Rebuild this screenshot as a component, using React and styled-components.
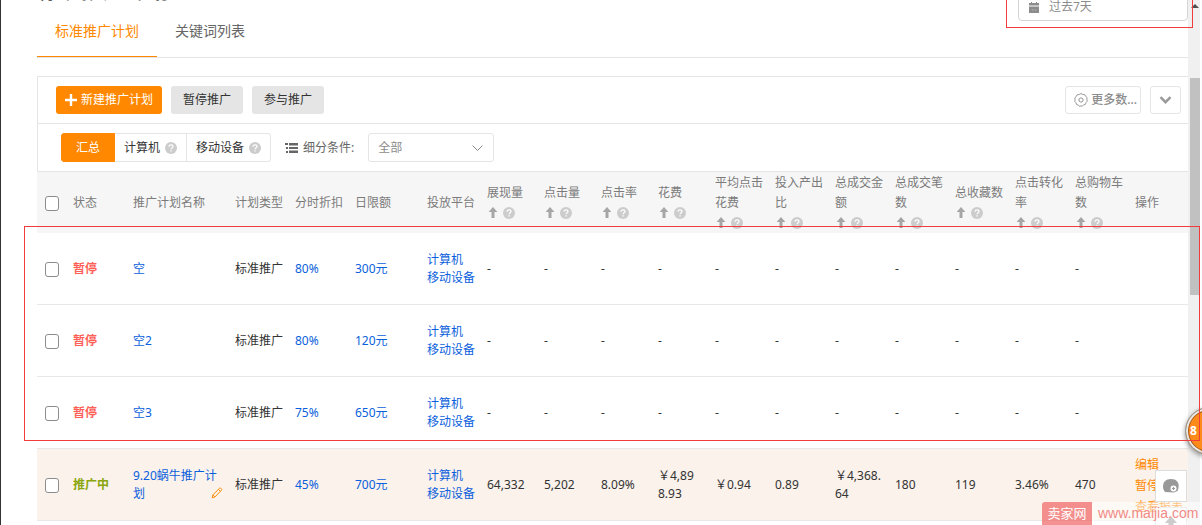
import { useState } from 'react'
import styled, { createGlobalStyle } from 'styled-components'

const METRICS = [
  { label: '展现量', narrow: true },
  { label: '点击量', narrow: true },
  { label: '点击率', narrow: true },
  { label: '花费', narrow: true },
  { label: '平均点击花费' },
  { label: '投入产出比' },
  { label: '总成交金额' },
  { label: '总成交笔数' },
  { label: '总收藏数' },
  { label: '点击转化率' },
  { label: '总购物车数' },
]

const EMPTY = METRICS.map(() => '-')

const PLANS = [
  { id: 1, name: '空', discount: '80%', limit: '300元', values: EMPTY },
  { id: 2, name: '空2', discount: '80%', limit: '120元', values: EMPTY },
  { id: 3, name: '空3', discount: '75%', limit: '650元', values: EMPTY },
  {
    id: 4,
    name: '9.20蜗牛推广计划',
    discount: '45%',
    limit: '700元',
    active: true,
    values: ['64,332', '5,202', '8.09%', '￥4,898.93', '￥0.94', '0.89', '￥4,368.64', '180', '119', '3.46%', '470'],
  },
]

function Help() {
  return (
    <HelpIcon viewBox="0 0 12 12" aria-hidden="true">
      <circle cx="6" cy="6" r="6" fill="#ccc" />
      <path d="M4 4.8C4 3.5 4.8 2.8 6 2.8s2 .7 2 1.7c0 1.3-1.9 1.4-1.9 2.8" fill="none" stroke="#fff" strokeWidth="1.2" />
      <path d="M5.4 8.3h1.3v1.3H5.4z" fill="#fff" />
    </HelpIcon>
  )
}

function SortArrow() {
  return (
    <svg width="10" height="11" viewBox="0 0 10 11" aria-hidden="true">
      <path d="M5 0L9.4 5H6.5v6h-3V5H.6z" fill="#a6a6a6" />
    </svg>
  )
}

function Plan({ plan }) {
  return (
    <Row $active={plan.active}>
      <Cell><Check type="checkbox" aria-label={plan.name} /></Cell>
      <Cell><Status $active={plan.active}>{plan.active ? '推广中' : '暂停'}</Status></Cell>
      <Cell>
        <NameBox>
          <Link href="#plan">{plan.name}</Link>
          {plan.active && (
            <EditButton type="button" aria-label="修改名称">
              <svg width="12" height="12" viewBox="0 0 12 12" fill="none" stroke="#ff8800">
                <path d="M1.2 10.8l.8-3L8.2 1.5c.6-.6 1.4-.6 2 0s.6 1.4 0 2L4 9.9zM7.4 2.4l2 2M2 7.9l2 2" />
              </svg>
            </EditButton>
          )}
        </NameBox>
      </Cell>
      <Cell>标准推广</Cell>
      <Cell><Link href="#discount">{plan.discount}</Link></Cell>
      <Cell><Link href="#limit">{plan.limit}</Link></Cell>
      <Cell>
        <Link href="#pc">计算机</Link>
        <br />
        <Link href="#mobile">移动设备</Link>
      </Cell>
      {plan.values.map((value, i) => (
        <Cell key={METRICS[i].label} $narrow={METRICS[i].narrow}>{value}</Cell>
      ))}
      <Cell>
        {plan.active && (
          <Actions>
            <ActionLink href="#edit">编辑</ActionLink>
            <ActionLink href="#pause">暂停</ActionLink>
            <ActionLink href="#report">查看报表</ActionLink>
          </Actions>
        )}
      </Cell>
    </Row>
  )
}

export default function App() {
  const [device, setDevice] = useState('all')

  return (
    <>
      <GlobalStyle />
      <Page>
        <Main>
          <Head>
            <Title>标准推广计划</Title>
            <DateButton type="button">
              <svg width="10" height="11" viewBox="0 0 10 11" aria-hidden="true">
                <path d="M0 1h2V0h1v1h4V0h1v1h2v2.5H0zM0 4.5h10V11H0z" fill="#8c8c8c" />
                <path d="M2.5 7.5h1l.5 1 1-1 1 1 1.5-1" fill="none" stroke="#bbb" strokeWidth=".6" />
              </svg>
              过去7天
            </DateButton>
          </Head>
          <Tabs>
            <Tab href="#plans" $active>标准推广计划</Tab>
            <Tab href="#keywords">关键词列表</Tab>
          </Tabs>

          <Panel>
            <Toolbar>
              <Button type="button" $primary>
                <svg width="12" height="12" viewBox="0 0 12 12" aria-hidden="true">
                  <path d="M6 0v12M0 6h12" stroke="#fff" strokeWidth="2.4" />
                </svg>
                新建推广计划
              </Button>
              <Button type="button">暂停推广</Button>
              <Button type="button">参与推广</Button>
              <Spacer />
              <OutlineButton type="button" $tight>
                <svg width="14" height="14" viewBox="0 0 14 14" fill="none" stroke="#999" aria-hidden="true">
                  <path d="M5.2 1.5Q7-.4 8.800 1.500Q11.300 1 11.600 3.300Q13.900 4.200 12.900 6.200Q14 8.600 12 9.600Q12 12 9.500 11.900Q8.500 13.900 7 13Q5 14 4.300 12Q1.900 12.200 2 9.800Q0 8.700 1.100 6.800Q-.1 4.500 2.200 3.700Q2.400 1.200 5.200 1.500z" />
                  <path d="M7 4.800l2 1.100v2.200L7 9.200 5 8.100V5.900z" />
                </svg>
                更多数...
              </OutlineButton>
              <OutlineButton type="button" aria-label="展开">
                <svg width="13" height="8" viewBox="0 0 13 8" aria-hidden="true">
                  <path d="M1.5 1.2l5 5 5-5" fill="none" stroke="#999" strokeWidth="2.4" />
                </svg>
              </OutlineButton>
            </Toolbar>
            <Filters>
              <Segments>
                <Segment type="button" $wide $on={device === 'all'} onClick={() => setDevice('all')}>汇总</Segment>
                <Segment type="button" $on={device === 'pc'} onClick={() => setDevice('pc')}>计算机<Help /></Segment>
                <Segment type="button" $on={device === 'mobile'} onClick={() => setDevice('mobile')}>移动设备<Help /></Segment>
              </Segments>
              <FilterLabel htmlFor="condition">
                <svg width="13" height="10" viewBox="0 0 13 10" aria-hidden="true">
                  <path d="M0 0h3v2H0zM4 0h9v2.5H4zM1 4h2v2H1zM4 4h9v2H4zM1 8h2v2H1zM4 7.5h9V10H4z" fill="#666" />
                </svg>
                细分条件:
              </FilterLabel>
              <SelectBox>
                <Select id="condition">
                  <option>全部</option>
                </Select>
                <svg width="11" height="6" viewBox="0 0 11 6" aria-hidden="true">
                  <path d="M.5.5l5 5 5-5" fill="none" stroke="#888" />
                </svg>
              </SelectBox>
            </Filters>
          </Panel>

          <Table>
            <colgroup>
              <Col $w={30} />
              <Col $w={60} />
              <Col />
              <Col $w={60} />
              <Col $w={60} />
              <Col $w={72} />
              <Col $w={60} />
              {METRICS.map((m) => <Col key={m.label} $w={m.narrow ? 57 : 60} />)}
              <Col $w={59} />
            </colgroup>
            <thead>
              <tr>
                <HeadCell><Check type="checkbox" aria-label="全选" /></HeadCell>
                <HeadCell>状态</HeadCell>
                <HeadCell>推广计划名称</HeadCell>
                <HeadCell>计划类型</HeadCell>
                <HeadCell>分时折扣</HeadCell>
                <HeadCell>日限额</HeadCell>
                <HeadCell>投放平台</HeadCell>
                {METRICS.map((m) => (
                  <HeadCell key={m.label}>
                    {m.label}
                    <Sort><SortArrow /><Help /></Sort>
                  </HeadCell>
                ))}
                <HeadCell>操作</HeadCell>
              </tr>
            </thead>
            <tbody>
              {PLANS.map((plan) => <Plan key={plan.id} plan={plan} />)}
            </tbody>
          </Table>
        </Main>

        <Track>
          <svg width="8" height="4" viewBox="0 0 8 4" aria-hidden="true">
            <path d="M4 0l4 4H0z" fill="#505050" />
          </svg>
          <Thumb />
        </Track>

        <Badge>8</Badge>
        <SideTools>
          <SideButton type="button" aria-label="客服">
            <svg width="18" height="16" viewBox="0 0 18 16" aria-hidden="true">
              <path d="M3 14C-1 9 1 1 9 1s9 7 6.500 12l-3.500 1.500z" fill="#999" />
              <circle cx="11.5" cy="10.5" r="3" fill="#fff" />
              <path d="M11.500 9v3M10 10.500h3" stroke="#999" strokeWidth="1.2" />
            </svg>
          </SideButton>
          <SideButton type="button" aria-label="返回顶部">
            <svg width="12" height="14" viewBox="0 0 12 14" aria-hidden="true">
              <path d="M6 0l6 7H8.500v7h-5V7H0z" fill="#999" />
            </svg>
          </SideButton>
        </SideTools>
        <Watermark>
          <WatermarkName>卖家网</WatermarkName>
          <WatermarkUrl>www.maijia.com</WatermarkUrl>
        </Watermark>
        <DateMark />
        <RowsMark />
      </Page>
    </>
  )
}

const GlobalStyle = createGlobalStyle`
  * {
    box-sizing: border-box;
  }

  body {
    margin: 0;
    background: #fff;
    color: #333;
    font: 12px/18px "Noto Sans", "Noto Sans CJK SC", sans-serif;
  }

  button, select {
    font: inherit;
    margin: 0;
  }

  svg {
    flex: none;
  }
`

const Page = styled.div`
  position: relative;
  display: flex;
  height: 100vh;
  overflow: hidden;
  padding-right: 2px;
  border-left: 1px solid #333;
`

const Main = styled.main`
  flex: 1;
  min-width: 0;
  padding-left: 36px;
`

/* the page is scrolled down, so the head is partly out of view */
const Head = styled.header`
  display: flex;
  align-items: flex-start;
  justify-content: space-between;
  height: 32px;
  margin-top: -11px;
`

const Title = styled.h1`
  margin: -11px 0 0;
  font-size: 22px;
  line-height: 22px;
  font-weight: 400;
`

const DateButton = styled.button`
  display: flex;
  align-items: center;
  gap: 10px;
  width: 170px;
  height: 32px;
  padding: 4px 10px 0;
  border: 1px solid #d5d5d5;
  border-radius: 4px;
  background: #fff;
  color: #8c8c8c;
`

const Tabs = styled.nav`
  display: flex;
  border-bottom: 1px solid #e5e5e5;
`

const Tab = styled.a`
  height: 36px;
  padding: 0 18px;
  border-bottom: 1px solid ${(p) => (p.$active ? '#ff8800' : 'transparent')};
  color: ${(p) => (p.$active ? '#ff8800' : '#666')};
  font-size: 14px;
  line-height: 20px;
  text-decoration: none;
`

const Panel = styled.section`
  margin-top: 18px;
  border: 1px solid #e5e5e5;
  border-right: 0;
`

const Toolbar = styled.div`
  display: flex;
  align-items: center;
  gap: 9px;
  height: 47px;
  padding: 0 7px 0 18px;
  border-bottom: 1px solid #e5e5e5;
`

const Button = styled.button`
  display: flex;
  align-items: center;
  gap: 4px;
  height: 28px;
  padding: 0 ${(p) => (p.$primary ? 9 : 12)}px;
  border: 0;
  border-radius: 3px;
  background: ${(p) => (p.$primary ? '#ff8800' : '#e5e5e5')};
  color: ${(p) => (p.$primary ? '#fff' : '#333')};
`

const Spacer = styled.div`
  flex: 1;
`

const OutlineButton = styled.button`
  display: flex;
  align-items: center;
  gap: 3px;
  height: 28px;
  padding: 0 ${(p) => (p.$tight ? 3 : 8)}px 0 8px;
  border: 1px solid #e5e5e5;
  border-radius: 3px;
  background: #fff;
  color: #8c8c8c;
  font-weight: 500;
`

const Filters = styled.div`
  display: flex;
  align-items: center;
  height: 47px;
  padding-left: 23px;
`

const Segments = styled.div`
  display: flex;
`

const Segment = styled.button`
  display: flex;
  align-items: center;
  gap: 5px;
  height: 29px;
  padding: 0 ${(p) => (p.$wide ? 14 : 9)}px;
  border: 1px solid ${(p) => (p.$on ? '#ff8800' : '#e5e5e5')};
  border-left-width: ${(p) => (p.$wide ? 1 : 0)}px;
  background: ${(p) => (p.$on ? '#ff8800' : '#fff')};
  color: ${(p) => (p.$on ? '#fff' : '#333')};

  &:first-child {
    border-radius: 3px 0 0 3px;
  }

  &:last-child {
    border-radius: 0 3px 3px 0;
  }
`

const FilterLabel = styled.label`
  display: flex;
  align-items: center;
  gap: 5px;
  margin: 0 14px;
  color: #666;
`

const SelectBox = styled.div`
  display: flex;
  align-items: center;
  width: 126px;
  height: 29px;
  padding-right: 10px;
  border: 1px solid #e5e5e5;
  border-radius: 3px;
`

const Select = styled.select`
  flex: 1;
  appearance: none;
  padding: 0 9px;
  border: 0;
  background: transparent;
  color: #8c8c8c;
`

const Table = styled.table`
  width: 100%;
  table-layout: fixed;
  border-spacing: 0;
`

const Col = styled.col`
  width: ${(p) => (p.$w ? `${p.$w}px` : 'auto')};
`

const HeadCell = styled.th`
  height: 61px;
  padding: 0 6px;
  background: #f6f6f6;
  color: #7b7b7b;
  font-weight: 400;
  line-height: 20px;
  text-align: left;
  word-break: break-all;
`

const Sort = styled.span`
  display: flex;
  align-items: center;
  gap: 5px;
  height: 20px;
  padding-left: 1px;
`

const HelpIcon = styled.svg`
  width: 12px;
  height: 12px;
`

const Row = styled.tr`
  height: 72px;
  background: ${(p) => (p.$active ? '#faf2eb' : '#fff')};
`

const Cell = styled.td`
  padding: 0 ${(p) => (p.$narrow ? 9 : 6)}px 0 6px;
  border-bottom: 1px solid #e8e8e8;
  word-break: break-all;
`

const Check = styled.input`
  appearance: none;
  display: block;
  width: 14px;
  height: 15px;
  margin: 2px 0 0 2px;
  border: 1px solid #8c8c8c;
  border-radius: 3px;
  background: #fff;

  &:checked {
    background: #ff8800;
  }
`

const Status = styled.strong`
  color: ${(p) => (p.$active ? '#8aa60b' : '#ff5f57')};
`

const NameBox = styled.div`
  position: relative;
`

const Link = styled.a`
  color: #0b5fdc;
  text-decoration: none;
`

const EditButton = styled.button`
  position: absolute;
  right: 0;
  bottom: 4px;
  display: flex;
  padding: 0;
  border: 0;
  background: none;
`

const Actions = styled.div`
  display: flex;
  flex-direction: column;
  height: 62px;
`

const ActionLink = styled.a`
  color: #ff8800;
  line-height: 21px;
  text-decoration: none;
  white-space: nowrap;
`

const Track = styled.div`
  display: flex;
  flex-direction: column;
  align-items: center;
  gap: 70px;
  width: 12px;
  padding: 4px 0 0 2px;
  background: #f0f0f0;
`

const Thumb = styled.div`
  width: 10px;
  height: 217px;
  background: #c1c1c1;
`

const Badge = styled.div`
  position: absolute;
  top: 407px;
  right: -31px;
  width: 48px;
  height: 48px;
  padding-left: 4px;
  border: 1px solid #999;
  border-radius: 50%;
  background: #ff8a1c;
  box-shadow: inset 0 0 0 2px #e8e8e8, inset 0 0 0 3px #a85a10, 0 2px 5px rgba(0, 0, 0, 0.4);
  color: #fff;
  font-weight: 700;
  line-height: 46px;
`

const SideTools = styled.div`
  position: absolute;
  top: 470px;
  right: 15px;
  display: flex;
  flex-direction: column;
  gap: 5px;
`

const SideButton = styled.button`
  display: flex;
  align-items: center;
  justify-content: center;
  width: 32px;
  height: 32px;
  padding: 0;
  border: 1px solid #ddd;
  background: #fff;
`

const Watermark = styled.div`
  position: absolute;
  right: 2px;
  bottom: 0;
  display: flex;
  height: 23px;
  font-size: 13px;
  line-height: 23px;
`

const WatermarkName = styled.span`
  width: 50px;
  border-radius: 3px 0 0 0;
  background: rgba(240, 100, 100, 0.7);
  color: #fff;
  text-align: center;
`

const WatermarkUrl = styled.span`
  width: 108px;
  padding-left: 6px;
  background: rgba(255, 255, 255, 0.5);
  color: #f08a86;
  font-family: "Liberation Sans", sans-serif;
  font-size: 14px;
`

const DateMark = styled.div`
  position: absolute;
  top: -10px;
  right: 9px;
  width: 187px;
  height: 38px;
  border: 1px solid #f03c3c;
  pointer-events: none;
`

const RowsMark = styled.div`
  position: absolute;
  top: 226px;
  right: 2px;
  left: 23px;
  height: 215px;
  border: 1px solid #f03c3c;
  pointer-events: none;
`
